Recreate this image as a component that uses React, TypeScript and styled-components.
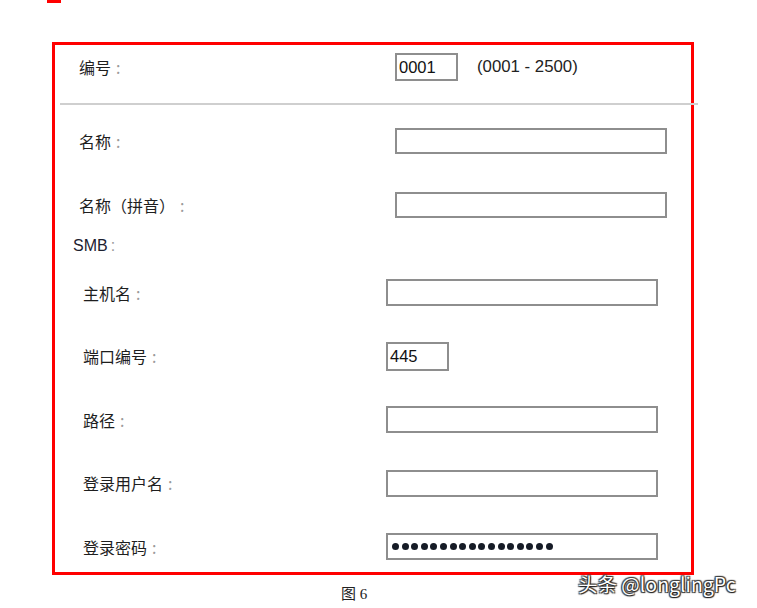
import styled, { createGlobalStyle } from "styled-components";

const GlobalStyle = createGlobalStyle`
  html, body {
    margin: 0;
    padding: 0;
    background: #ffffff;
  }
  body {
    font-family: "Liberation Sans", "Noto Sans CJK SC", sans-serif;
    color: #222;
  }
`;

const Page = styled.div`
  position: relative;
  width: 757px;
  height: 608px;
  overflow: hidden;
  background: #fff;
`;

// the bit of a previous frame peeking in at the very top
const TopMark = styled.div`
  width: 14px;
  height: 3px;
  margin-left: 47px;
  background: #f00;
`;

const Frame = styled.section`
  box-sizing: border-box;
  width: 642px;
  height: 533px;
  margin: 39px 0 0 52px;
  border: 3px solid #f00;
  display: flex;
  flex-direction: column;
`;

const Row = styled.div<{ $h: number; $pad: number; $col: number }>`
  display: grid;
  grid-template-columns: ${(p) => p.$col}px 1fr;
  align-items: center;
  height: ${(p) => p.$h}px;
  padding-left: ${(p) => p.$pad}px;
  flex-shrink: 0;
`;

const TopRow = styled(Row)`
  margin-top: 8px;
`;

const Label = styled.span`
  font-family: "Noto Sans CJK SC", "Liberation Sans", sans-serif;
  font-size: 16px;
  line-height: 20px;
  color: #1e1e1e;
  white-space: nowrap;
`;

const Colon = styled.span`
  color: #9a9a9a;
  margin-left: 5px;
`;

const SectionTitle = styled.div`
  font-family: "Liberation Sans", sans-serif;
  font-size: 16px;
  line-height: 16px;
  color: #1c2030;
  padding-left: 18px;
  margin-top: 1px;
  margin-bottom: 7px;
  height: 16px;
  flex-shrink: 0;
`;

const Controls = styled.div`
  display: flex;
  align-items: center;
  gap: 19px;
`;

const Field = styled.div<{ $w: number; $h: number }>`
  box-sizing: border-box;
  width: ${(p) => p.$w}px;
  height: ${(p) => p.$h}px;
  border: 2px solid #8e8e8e;
  background: #fff;
  display: flex;
  align-items: center;
  padding-left: 2px;
  font-family: "Liberation Sans", sans-serif;
  font-size: 16.5px;
  color: #111;
`;

const Hint = styled.span`
  font-family: "Liberation Sans", sans-serif;
  font-size: 16.8px;
  color: #222;
`;

const Divider = styled.div`
  width: 638px;
  height: 2px;
  margin: 22px 0 4px 5px;
  background: #cfcfcf;
  flex-shrink: 0;
`;

const Dots = styled.div`
  display: flex;
  gap: 2.6px;
  padding-left: 2px;
`;

const Dot = styled.span`
  width: 7px;
  height: 7px;
  border-radius: 50%;
  background: #161b26;
`;

const Caption = styled.div`
  font-family: "Liberation Serif", "Noto Sans CJK SC", serif;
  font-size: 15px;
  color: #222;
  margin: 7px 0 0 341px;
`;

const Watermark = styled.div`
  position: absolute;
  left: 578px;
  top: 569px;
  font-family: "Noto Sans CJK SC", "Liberation Sans", sans-serif;
  font-size: 19.5px;
  color: #fff;
  text-shadow: 0 0 1px #111, 1px 1px 1px #222, -1px -1px 1px #444, 1px -1px 1px #444,
    -1px 1px 1px #444;
  white-space: nowrap;
`;

const Lbl = ({ text }: { text: string }) => (
  <Label>
    {text}
    <Colon>:</Colon>
  </Label>
);

const smbRows = [
  { label: "主机名", w: 272 },
  { label: "端口编号", w: 63, value: "445", h: 29 },
  { label: "路径", w: 272 },
  { label: "登录用户名", w: 272 },
];

export default function App() {
  return (
    <Page>
      <GlobalStyle />
      <TopMark />
      <Frame>
        <TopRow $h={28} $pad={24} $col={316}>
          <Lbl text="编号" />
          <Controls>
            <Field $w={63} $h={28}>0001</Field>
            <Hint>(0001 - 2500)</Hint>
          </Controls>
        </TopRow>
        <Divider />
        <Row $h={64} $pad={24} $col={316}>
          <Lbl text="名称" />
          <Field $w={272} $h={26} />
        </Row>
        <Row $h={64} $pad={24} $col={316}>
          <Lbl text="名称（拼音）" />
          <Field $w={272} $h={26} />
        </Row>
        <SectionTitle>
          SMB<Colon style={{ marginLeft: 3 }}>:</Colon>
        </SectionTitle>
        {smbRows.map((r) => (
          <Row key={r.label} $h={63.5} $pad={28} $col={303}>
            <Lbl text={r.label} />
            <Field $w={r.w} $h={r.h ?? 27}>
              {r.value}
            </Field>
          </Row>
        ))}
        <Row $h={63.5} $pad={28} $col={303}>
          <Lbl text="登录密码" />
          <Field $w={272} $h={27}>
            <Dots>
              {Array.from({ length: 17 }).map((_, i) => (
                <Dot key={i} />
              ))}
            </Dots>
          </Field>
        </Row>
      </Frame>
      <Caption>图 6</Caption>
      <Watermark>头条 @longlingPc</Watermark>
    </Page>
  );
}
